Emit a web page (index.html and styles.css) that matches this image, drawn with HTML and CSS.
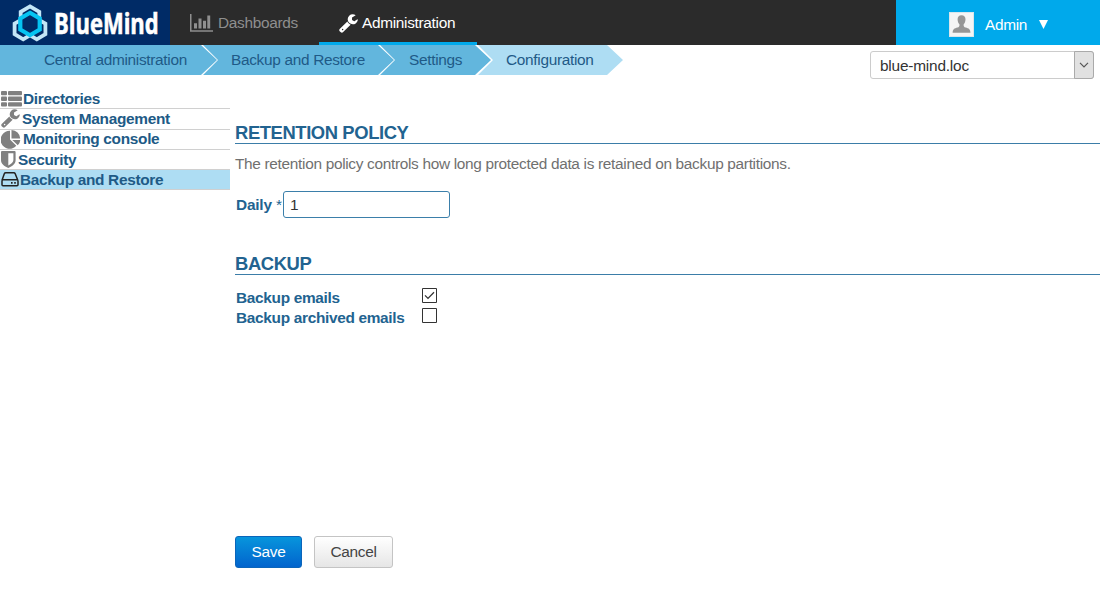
FILE: index.html
```
<!DOCTYPE html>
<html lang="en">
<head>
<meta charset="utf-8">
<title>BlueMind</title>
<link rel="stylesheet" href="styles.css">
</head>
<body>
<header class="topbar">
  <div class="brand">
    <svg class="brand-mark" width="36" height="38" viewBox="0 0 36 38" fill="none">
      <g stroke="#c3e6f7" stroke-width="3.800">
        <path d="M18 2.400l9.300 5.400v10.800l-9.300 5.400-9.300-5.400v-10.800z"/>
        <path d="M11.200 14.600l8.600 5v10.600l-8.600 5.200-8.600-5.200v-10.600z"/>
        <path d="M24.800 14.600l8.600 5v10.600l-8.600 5.200-8.600-5.200v-10.600z"/>
      </g>
      <path d="M18 8.800l9.700 5.600v11.200l-9.700 5.600-9.700-5.600v-11.200z" fill="#002b66" stroke="#05c4f2" stroke-width="4.200"/>
    </svg>
    <span class="brand-name">BlueMind</span>
  </div>
  <nav class="tabs">
    <a class="tab dash">
      <svg width="23" height="18" viewBox="0 0 23 18" fill="#8f8f8f"><path d="M0 0h1.500v16.300h21.500v1.500h-23zM4 9.300h3v5.300h-3zM8.500 4.600h3v10h-3zM13 6.800h3v7.800h-3zM17.300 1.500h2.900v13.100h-2.900z"/></svg>
      <span>Dashboards</span>
    </a>
    <a class="tab admin">
      <svg width="19" height="19" viewBox="0 110 1680 1680" fill="#fff"><path d="M384 1472q0-26-19-45t-45-19-45 19-19 45 19 45 45 19 45-19 19-45zm644-420l-682 682q-37 37-90 37-52 0-91-37l-106-108q-38-36-38-90 0-53 38-91l681-681q39 98 114.500 173.500t173.500 114.500zm634-435q0 39-23 106-47 134-164.500 217.500t-258.500 83.500q-185 0-316.500-131.500t-131.500-316.500 131.500-316.500 316.500-131.500q58 0 121.500 16.500t107.500 46.500q16 11 16 28t-16 28l-293 169v224l193 107q5-3 79-48.500t135.500-81 70.500-35.500q15 0 23.500 10t8.500 25z"/></svg>
      <span>Administration</span>
    </a>
  </nav>
  <div class="user">
    <svg width="25" height="25" viewBox="0 0 25 25"><rect width="25" height="25" fill="#d9e6ec"/><rect x="1" y="1" width="23" height="23" fill="#f5f5f5"/><path d="M12.500 3.200c2.700 0 4.100 1.700 4 4.300-.1 2.200-.9 3.900-1.900 5 0 2 .4 2.500 2 3.100 3.200 1 4.700 1.500 4.900 5.200H3.600c.2-3.700 1.700-4.200 4.900-5.200 1.600-.6 2-1.100 2-3.100-1-1.100-1.900-2.800-1.900-5-.1-2.600 1.200-4.300 3.900-4.300z" fill="#969696"/></svg>
    <span class="user-name">Admin</span>
    <svg class="caret" width="9" height="9" viewBox="0 0 9 9"><path d="M0 0h9l-4.500 9z" fill="#fff"/></svg>
  </div>
</header>
<div class="subbar">
  <nav class="crumbs">
    <a class="crumb c1">Central administration</a>
    <a class="crumb c2">Backup and Restore</a>
    <a class="crumb c3">Settings</a>
    <a class="crumb c4">Configuration</a>
  </nav>
  <div class="domain">
    <span class="domain-name">blue-mind.loc</span>
    <span class="domain-arrow"><svg width="10" height="6" viewBox="0 0 10 6" fill="none" stroke="#555" stroke-width="1.200"><path d="M1 .8l4 4 4-4"/></svg></span>
  </div>
</div>
<div class="columns">
  <aside class="menu">
    <a class="item i1"><svg width="21" height="16" viewBox="0 0 21 16" fill="#808080"><rect y="0" width="6" height="4.300" rx="1"/><rect x="7" y="0" width="14" height="4.300" rx="1"/><rect y="5.600" width="6" height="4.300" rx="1"/><rect x="7" y="5.600" width="14" height="4.300" rx="1"/><rect y="11.200" width="6" height="4.300" rx="1"/><rect x="7" y="11.200" width="14" height="4.300" rx="1"/></svg><span>Directories</span></a>
    <a class="item i2"><svg width="19" height="19" viewBox="0 110 1680 1680" fill="#808080"><path d="M384 1472q0-26-19-45t-45-19-45 19-19 45 19 45 45 19 45-19 19-45zm644-420l-682 682q-37 37-90 37-52 0-91-37l-106-108q-38-36-38-90 0-53 38-91l681-681q39 98 114.500 173.500t173.500 114.500zm634-435q0 39-23 106-47 134-164.500 217.500t-258.500 83.500q-185 0-316.500-131.500t-131.500-316.500 131.500-316.500 316.500-131.500q58 0 121.500 16.500t107.500 46.500q16 11 16 28t-16 28l-293 169v224l193 107q5-3 79-48.500t135.500-81 70.500-35.500q15 0 23.500 10t8.500 25z"/></svg><span>System Management</span></a>
    <a class="item i3"><svg width="20" height="19" viewBox="0 0 20 19" fill="#808080"><path d="M9 .8v8.800l6.300 6.200A9 9 0 1 1 9 .8zM10.500 0a8.800 8.800 0 0 1 8.700 8.500h-8.700zM11.300 9.900h8a9 9 0 0 1-2.500 5.400z"/></svg><span>Monitoring console</span></a>
    <a class="item i4"><svg width="15" height="17" viewBox="0 0 15 17" fill="#808080"><path fill-rule="evenodd" d="M1 0h12.600q1 0 1 1v8.200c0 3.600-3.200 6.100-7.300 7.800C3.200 15.300 0 12.800 0 9.200V1q0-1 1-1zM7.300 2.200v12.400c3-1.600 5.100-3.300 5.100-5.600V2.200z"/></svg><span>Security</span></a>
    <a class="item i5"><svg width="18" height="15" viewBox="0 0 18 15" fill="none" stroke="#222" stroke-width="1.500"><path d="M1 8.300L3.300 1.800Q3.700.8 4.800.8h8q1 0 1.400 1L16.800 8.300M2 7.800h14q1 0 1 1v4q0 1-1 1H2q-1 0-1-1v-4q0-1 1-1z"/><path d="M10 10.800h1.600M13.200 10.800h1.600" stroke-width="1.800"/></svg><span>Backup and Restore</span></a>
  </aside>
  <main class="content">
    <h2 class="title t1">RETENTION POLICY</h2>
    <p class="hint">The retention policy controls how long protected data is retained on backup partitions.</p>
    <div class="daily">
      <label>Daily <span class="star">*</span></label>
      <div class="field">1</div>
    </div>
    <h2 class="title t2">BACKUP</h2>
    <div class="checks">
      <div class="check"><span class="l1">Backup emails</span><svg width="15" height="15" viewBox="0 0 15 15" fill="#fff" stroke="#333"><path d="M.5.5h14v14H.500z"/><path d="M3 7.400l3 3L12 4.300" fill="none" stroke-width="1.300"/></svg></div>
      <div class="check"><span class="l2">Backup archived emails</span><svg width="15" height="15" viewBox="0 0 15 15" fill="#fff" stroke="#333"><path d="M.5.5h14v14H.500z"/></svg></div>
    </div>
    <div class="buttons">
      <button class="btn save">Save</button>
      <button class="btn cancel">Cancel</button>
    </div>
  </main>
</div>
</body>
</html>
```
FILE: styles.css
```
* { box-sizing: border-box; }
body { margin: 0; height: 594px; overflow: hidden; background: #fff; font: 15.4px/20px "Liberation Sans", Arial, sans-serif; letter-spacing: -.31px; color: #333; }
svg { display: block; flex: none; }
span, a, p, h2 { white-space: nowrap; }
.topbar { display: flex; height: 45px; background: #2b2b2b; }
.brand { display: flex; width: 170px; background: #002b66; padding: 4px 0 0 12px; }
.brand-name { margin: 0 0 0 6px; width: 104px; font: bold 28px/38px "Open Sans", sans-serif; letter-spacing: 0; color: #fff; -webkit-text-stroke: .6px #fff; transform: scaleX(.785); transform-origin: 0 0; }
.tabs { display: flex; flex: 1; }
.tab { display: flex; height: 45px; }
.dash { width: 149px; padding: 14px 0 0 20px; gap: 5px; color: #8f8f8f; }
.dash span, .admin span { margin-top: -1px; }
.admin { width: 158px; padding: 14px 0 0 20px; gap: 4px; color: #fff; border-bottom: 3px solid #00a9eb; }
.user { display: flex; width: 204px; background: #00a9eb; padding: 12px 0 0 53px; color: #fff; }
.user-name { width: 42px; margin: 3px 12px 0 11px; }
.caret { margin-top: 8px; }
.subbar { display: flex; justify-content: space-between; height: 44px; }
.crumbs { display: flex; height: 30px; }
.crumb { height: 30px; line-height: 30px; color: #1f5a87; background: #62b6dd; clip-path: polygon(0 0, calc(100% - 16px) 0, 100% 50%, calc(100% - 16px) 100%, 0 100%, 15px 50%); margin-left: -14px; }
.c1 { width: 217px; padding-left: 44px; margin-left: 0; clip-path: polygon(0 0, 201px 0, 100% 50%, 201px 100%, 0 100%); }
.c2 { width: 191px; padding-left: 28px; }
.c3 { width: 111px; padding-left: 29px; }
.c4 { width: 145px; padding-left: 28px; margin-left: -13px; background: #aeddf3; }
.domain { display: flex; width: 224px; height: 28px; margin: 6px 6px 0 0; border: 1px solid #ccc; border-radius: 3px; }
.domain-name { flex: 1; padding-left: 9px; line-height: 28px; letter-spacing: -.2px; }
.domain-arrow { display: flex; align-items: center; justify-content: center; width: 20px; margin: -1px; height: 28px; border: 1px solid #aaa; border-radius: 0 3px 3px 0; background: #e1e1e1; }
.columns { display: flex; }
.menu { width: 230px; }
.item { display: flex; align-items: center; height: 20.3px; padding-left: 1px; border-bottom: 1px solid #d0d0d0; font-weight: bold; color: #205a86; }
.i1 svg { margin-right: 1px; }
.i2 svg { margin-right: 2px; }
.i3 svg { margin-right: 2px; }
.i4 svg { margin-right: 2px; }
.i5 svg { margin-right: 1px; }
.i5 { background: #aeddf3; }
.content { flex: 1; padding-left: 5px; }
.title { margin: 0; border-bottom: 1px solid #3b7da8; font-size: 18.4px; line-height: 22px; letter-spacing: -.4px; color: #226390; }
.t1 { margin-top: 33px; height: 22px; }
.hint { margin: 10px 0 0; color: #707070; }
.daily { display: flex; margin-top: 17px; height: 27px; }
.daily label { width: 48px; padding-left: 1px; line-height: 28px; font-weight: bold; letter-spacing: -.2px; color: #226390; }
.star { font-weight: normal; }
.field { width: 167px; border: 1px solid #3b7faa; border-radius: 3px; padding-left: 6px; line-height: 26px; }
.t2 { margin-top: 35px; height: 22px; }
.checks { padding: 13px 0 0 1px; }
.check { display: flex; height: 20px; font-weight: bold; color: #226390; }
.check span { width: 186px; }
.buttons { display: flex; gap: 12px; margin-top: 208px; }
.btn { height: 32px; padding: 0; border: 1px solid #c4c4c4; border-radius: 3px; font: 15.4px/28px "Liberation Sans", Arial, sans-serif; letter-spacing: -.3px; }
.save { width: 67px; color: #fff; border-color: #0b65ba; background: linear-gradient(#0795dc, #0264cd); }
.cancel { width: 79px; color: #444; background: linear-gradient(#fff, #e6e6e6); }
```
